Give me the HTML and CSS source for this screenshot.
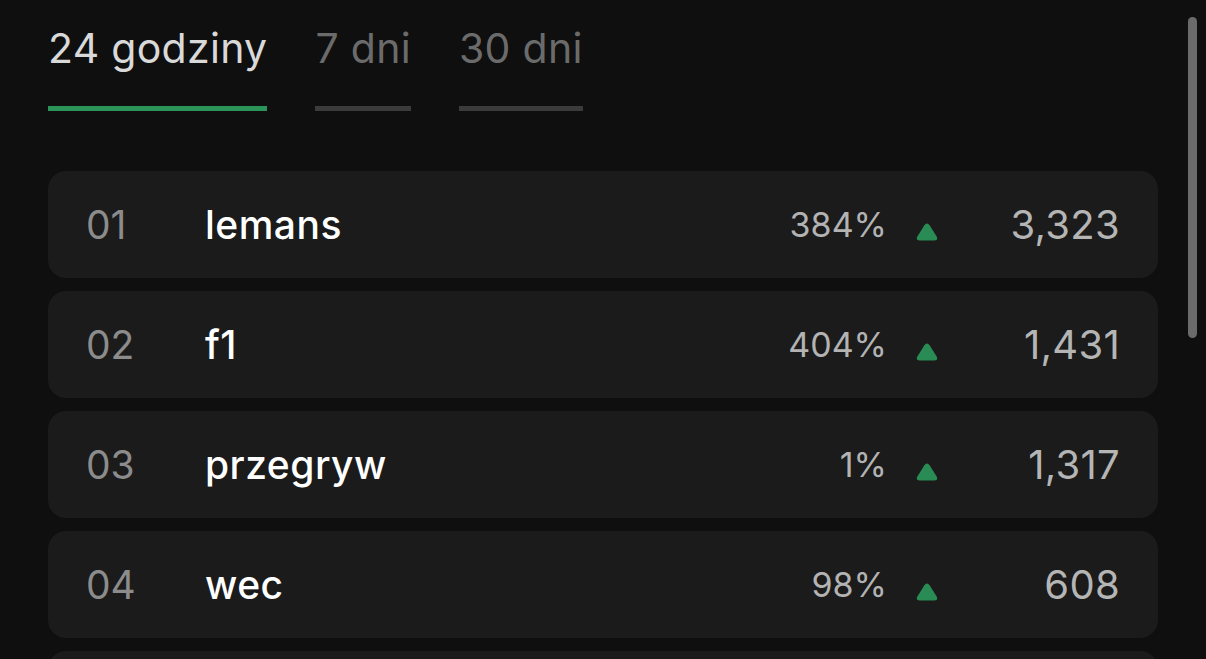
FILE: index.html
```html
<!DOCTYPE html>
<html lang="pl">
<head>
<meta charset="utf-8">
<link rel="stylesheet" href="styles.css">
</head>
<body>
<div class="page">
  <nav class="tabs">
    <div class="tab active">24 godziny</div>
    <div class="tab">7 dni</div>
    <div class="tab">30 dni</div>
  </nav>
  <ul class="list">
    <li class="row"><span class="rank">01</span><span class="name">lemans</span><span class="pct">384%</span><svg class="up" viewBox="0 0 22 18"><path d="M8.4 2.2 Q11 -1.4 13.6 2.2 L20.6 13.6 Q22.6 17.4 18.4 17.4 L3.6 17.4 Q-0.6 17.4 1.4 13.6 Z"/></svg><span class="val">3,323</span></li>
    <li class="row"><span class="rank">02</span><span class="name">f1</span><span class="pct">404%</span><svg class="up" viewBox="0 0 22 18"><path d="M8.4 2.2 Q11 -1.4 13.6 2.2 L20.6 13.6 Q22.6 17.4 18.4 17.4 L3.6 17.4 Q-0.6 17.4 1.4 13.6 Z"/></svg><span class="val">1,431</span></li>
    <li class="row"><span class="rank">03</span><span class="name">przegryw</span><span class="pct">1%</span><svg class="up" viewBox="0 0 22 18"><path d="M8.4 2.2 Q11 -1.4 13.6 2.2 L20.6 13.6 Q22.6 17.4 18.4 17.4 L3.6 17.4 Q-0.6 17.4 1.4 13.6 Z"/></svg><span class="val">1,317</span></li>
    <li class="row"><span class="rank">04</span><span class="name">wec</span><span class="pct">98%</span><svg class="up" viewBox="0 0 22 18"><path d="M8.4 2.2 Q11 -1.4 13.6 2.2 L20.6 13.6 Q22.6 17.4 18.4 17.4 L3.6 17.4 Q-0.6 17.4 1.4 13.6 Z"/></svg><span class="val">608</span></li>
    <li class="row"></li>
  </ul>
</div>
<div class="scrollbar"></div>
</body>
</html>
```
FILE: styles.css
```css
html, body {
  margin: 0;
  padding: 0;
  height: 100%;
  overflow: hidden;
  background: #0f0f0f;
  font-family: Inter, "Noto Sans", sans-serif;
}
.page {
  padding: 22px 48px 0 48px;
}
.tabs {
  display: flex;
  gap: 48px;
}
.tab {
  font-size: 41px;
  line-height: 52px;
  color: #6b6b6b;
  padding-bottom: 32px;
  border-bottom: 5px solid #3b3b3b;
  letter-spacing: 0.3px;
}
.tab.active {
  color: #d9d9d9;
  border-bottom-color: #2a9459;
}
.list {
  list-style: none;
  margin: 60px 0 0 0;
  padding: 0;
  display: flex;
  flex-direction: column;
  gap: 13px;
}
.row {
  width: 1110px;
  height: 107px;
  box-sizing: border-box;
  background: #1b1b1b;
  border-radius: 18px;
  display: flex;
  align-items: center;
  padding: 0 38px;
}
.rank {
  width: 119px;
  font-size: 39px;
  font-weight: 400;
  color: #8c8c8c;
}
.name {
  flex: 1;
  font-size: 39px;
  font-weight: 500;
  color: #ffffff;
  letter-spacing: 0.5px;
}
.pct {
  font-size: 34px;
  color: #b3b3b3;
}
.up {
  width: 22px;
  height: 18px;
  margin-left: 29px;
  margin-top: 15px;
  fill: #2a8c55;
}
.val {
  width: 182px;
  text-align: right;
  font-size: 40px;
  color: #b5b5b5;
  letter-spacing: 0.3px;
}
.scrollbar {
  position: absolute;
  left: 1188px;
  top: 17px;
  width: 9px;
  height: 321px;
  border-radius: 5px;
  background: #6b6b6b;
}
```
